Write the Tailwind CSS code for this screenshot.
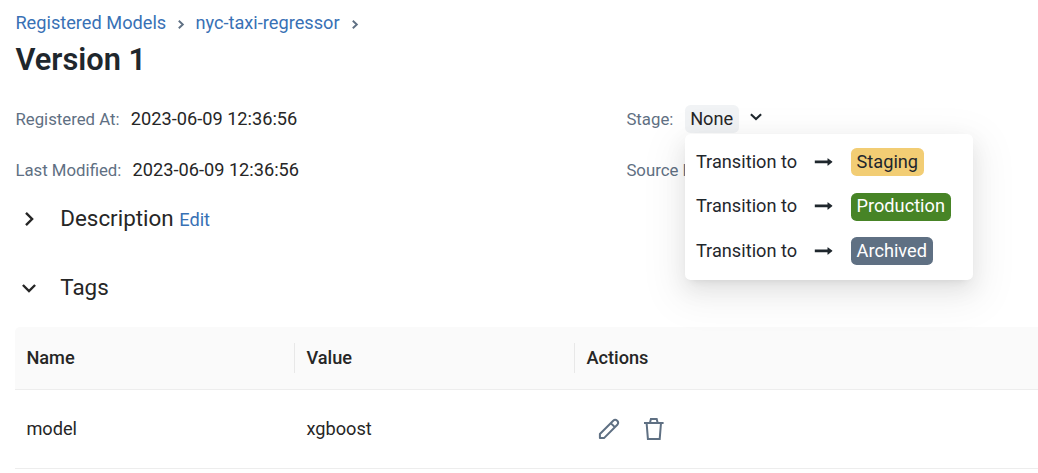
<!DOCTYPE html>
<html lang="en">
<head>
<meta charset="utf-8">
<title>Version 1</title>
<script src="https://cdn.jsdelivr.net/npm/@tailwindcss/browser@4"></script>
</head>
<body class="h-[473px] overflow-hidden bg-white pl-[15.4px] font-[Roboto,sans-serif] text-[18.2px] text-[#262626]">
<nav class="flex h-[28px] items-center pt-[18px] text-[#3871b5]">
  <a class="w-[151px] whitespace-nowrap">Registered Models</a>
  <svg class="ml-[11px] mr-[10px] mt-[3px] h-[9px] w-[8px] shrink-0" viewBox="0 0 8 9" fill="none" stroke="#5f7083" stroke-width="1.9"><path d="M1.8 .8 5.8 4.5 1.8 8.2"/></svg>
  <a class="w-[145px] whitespace-nowrap">nyc-taxi-regressor</a>
  <svg class="ml-[11px] mt-[3px] h-[9px] w-[8px] shrink-0" viewBox="0 0 8 9" fill="none" stroke="#5f7083" stroke-width="1.9"><path d="M1.8 .8 5.8 4.5 1.8 8.2"/></svg>
</nav>
<h1 class="mt-[12px] h-[40px] text-[30.8px] leading-[40px] font-semibold text-[#1f272d]">Version 1</h1>
<section class="mt-[25px] grid grid-cols-[611px_1fr] leading-[28px]">
  <div class="flex h-[51px] items-start"><span class="text-[16.8px] text-[#5f7083]">Registered At:</span><span class="ml-[11.2px]">2023-06-09 12:36:56</span></div>
  <div class="flex h-[51px] items-start"><span class="text-[16.8px] text-[#5f7083]">Stage:</span>
    <div class="relative ml-[11.2px] flex items-start">
      <span class="h-[28px] rounded-[5.6px] bg-[#f1f3f5] px-[5.6px] whitespace-nowrap">None</span>
      <svg class="mt-[8px] ml-[11px] h-[8px] w-[12px]" viewBox="0 0 12 8" fill="none" stroke="#1f272d" stroke-width="2.1"><path d="M.9 1.3 6 6.1 11.1 1.3"/></svg>
      <div class="absolute top-[29px] left-[.4px] z-10 h-[146px] w-[288px] rounded-[5.6px] bg-white px-[11px] pt-[14px] text-[#1f272d] shadow-[0_4.2px_8.4px_-5.6px_rgba(0,0,0,0.12),0_8.4px_22.4px_rgba(0,0,0,0.08),0_12.6px_39.2px_11.2px_rgba(0,0,0,0.05)]">
        <div class="flex h-[44.6px] items-start"><span class="w-[118px] whitespace-nowrap">Transition to</span><svg class="mt-[9px] mr-[18px] h-[10px] w-[19px]" viewBox="0 0 19 10"><path fill="currentColor" d="M.8 3.5H13.5V1.6Q13.5 .9 14.1 1.4L18.2 4.6Q18.6 4.9 18.2 5.3L14.1 8.5Q13.5 9 13.5 8.3V6.3H.8Z"/></svg><span class="h-[28px] rounded-[5.6px] bg-[#f2cd74] px-[5.6px]">Staging</span></div>
        <div class="flex h-[44.6px] items-start leading-[26px]"><span class="w-[118px] whitespace-nowrap">Transition to</span><svg class="mt-[8px] mr-[18px] h-[10px] w-[19px]" viewBox="0 0 19 10"><path fill="currentColor" d="M.8 3.5H13.5V1.6Q13.5 .9 14.1 1.4L18.2 4.6Q18.6 4.9 18.2 5.3L14.1 8.5Q13.5 9 13.5 8.3V6.3H.8Z"/></svg><span class="h-[28px] rounded-[5.6px] bg-[#478426] px-[5.6px] text-white">Production</span></div>
        <div class="flex h-[44.6px] items-start"><span class="w-[118px] whitespace-nowrap">Transition to</span><svg class="mt-[9px] mr-[18px] h-[10px] w-[19px]" viewBox="0 0 19 10"><path fill="currentColor" d="M.8 3.5H13.5V1.6Q13.5 .9 14.1 1.4L18.2 4.6Q18.6 4.9 18.2 5.3L14.1 8.5Q13.5 9 13.5 8.3V6.3H.8Z"/></svg><span class="h-[28px] rounded-[5.6px] bg-[#5f7083] px-[5.6px] text-white">Archived</span></div>
      </div>
    </div>
  </div>
  <div class="flex h-[45px] items-start"><span class="text-[16.8px] text-[#5f7083]">Last Modified:</span><span class="ml-[11.2px]">2023-06-09 12:36:56</span></div>
  <div class="h-[45px] text-[16.8px] text-[#5f7083]">Source Run:</div>
</section>
<section class="flex h-[36px] items-center">
  <svg class="mr-[23.9px] ml-[7px] h-[14px] w-[14px]" viewBox="0 0 14 14" fill="none" stroke="#262626" stroke-width="2.4"><path d="M4 .9 10.1 7 4 13.1"/></svg>
  <h2 class="flex items-baseline text-[22.4px]">Description<a class="ml-[5.6px] text-[18.2px] text-[#3871b5]">Edit</a></h2>
</section>
<section class="mt-[33px] flex h-[36px] items-center">
  <svg class="mr-[23.9px] ml-[7px] h-[14px] w-[14px]" viewBox="0 0 14 14" fill="none" stroke="#262626" stroke-width="2.4"><path d="M.9 4 7 10.1 13.1 4"/></svg>
  <h2 class="text-[22.4px]">Tags</h2>
</section>
<section class="mt-[21px]">
  <div class="grid h-[63px] grid-cols-[280px_280px_1fr] items-center rounded-tl-[5px] border-b border-[#ededed] bg-[#fafafa] font-medium">
    <div class="flex h-[30px] items-center border-r border-[#e8e8e8] pl-[11px]">Name</div>
    <div class="flex h-[30px] items-center border-r border-[#e8e8e8] pl-[11px]">Value</div>
    <div class="pl-[11px]">Actions</div>
  </div>
  <div class="grid h-[79px] grid-cols-[280px_280px_1fr] items-center border-b border-[#ededed]">
    <div class="pl-[11px]">model</div>
    <div class="pl-[11px]">xgboost</div>
    <div class="flex items-center pl-[23px] text-[#5f7083]">
      <svg class="h-[22px] w-[22px]" viewBox="0 0 22 22" fill="none" stroke="currentColor" stroke-width="2" stroke-linejoin="round"><path d="M1.9 16 15.2 2.7Q17.2 .9 19.2 2.8 21.1 4.8 19.3 6.8L6 20.1H1.9ZM12.9 5.2 16.8 9.1"/></svg>
      <svg class="ml-[23px] h-[24px] w-[22px]" viewBox="0 0 22 24" fill="none" stroke="currentColor" stroke-width="2"><path d="M1 6H20.6M3.6 6 4.9 21.9H16.7L18 6M6.9 5.9 7.9 2.1H13.7L14.7 5.9"/></svg>
    </div>
  </div>
</section>
</body>
</html>
